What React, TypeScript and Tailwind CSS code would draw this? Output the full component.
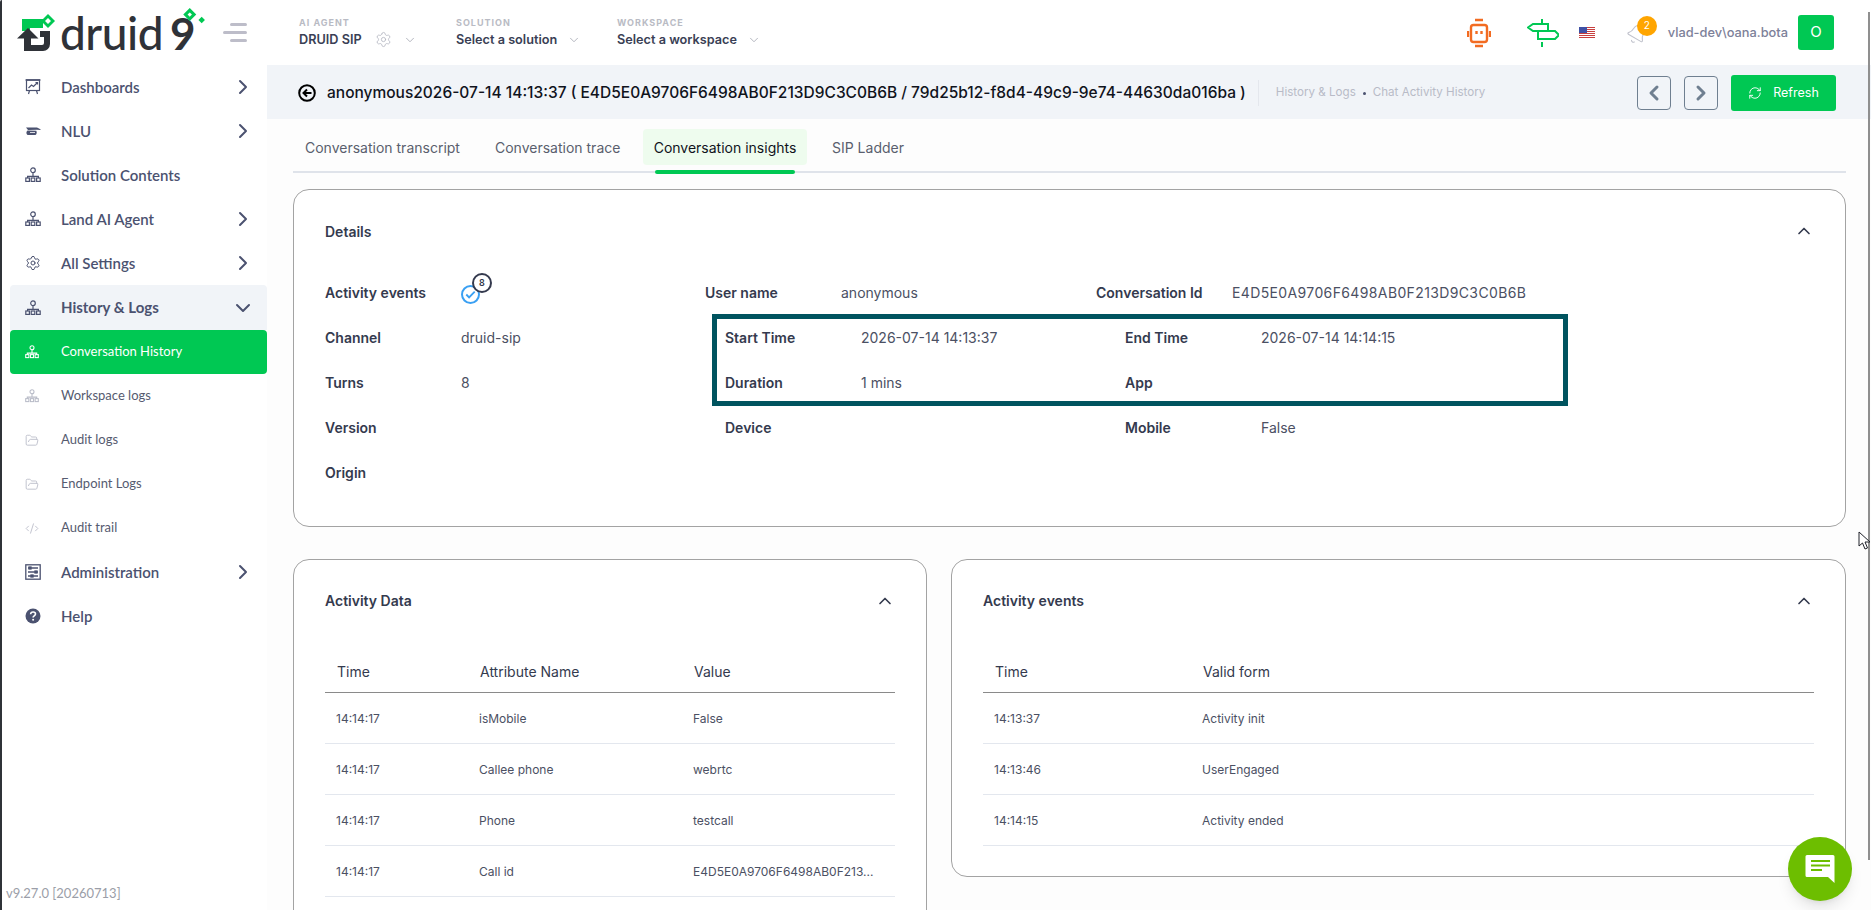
import { Bell, ChevronDown, ChevronLeft, ChevronRight, ChevronUp, CodeXml, FolderOpen, RefreshCw, Settings } from "lucide-react";
import { ReactNode } from "react";

function SiteMap({ className }: { className?: string }) {
    return (
        <svg viewBox="0 0 16 16" fill="none" stroke="currentColor" strokeWidth="1.2" className={className}>
            <circle cx="8" cy="3.2" r="2.3" />
            <path d="M8 5.5v4M2.6 11V9.3h10.8V11" />
            <rect x="0.8" y="11" width="3.6" height="3.4" />
            <rect x="6.2" y="11" width="3.6" height="3.4" />
            <rect x="11.6" y="11" width="3.6" height="3.4" />
        </svg>
    );
}

function BoardIcon({ className }: { className?: string }) {
    return (
        <svg viewBox="0 0 16 16" fill="none" stroke="currentColor" strokeWidth="1.2" className={className}>
            <path d="M0.6 1h14.800" strokeWidth="1.6" />
            <rect x="1.500" y="1" width="13" height="10.500" />
            <path d="M3.500 9l3-3 2 1.500L12.500 3.500M10.500 3.500h2v2" />
            <path d="M4.500 11.500L3.500 15M11.500 11.500l1 3.500" />
        </svg>
    );
}

function CapIcon({ className }: { className?: string }) {
    return (
        <svg viewBox="0 0 16 16" className={className}>
            <path d="M1 4.500h11l3.500 1.800v.7L12 6.800 3 7z" fill="currentColor" />
            <path d="M2.500 7.500c-1.500 1-1.500 3.500 0 4.500h8c1.200-.6 1.600-2.800.8-4.300z" fill="currentColor" />
            <path d="M5 9.500h5" stroke="#fff" strokeWidth="0.8" />
        </svg>
    );
}

function AdminIcon({ className }: { className?: string }) {
    return (
        <svg viewBox="0 0 16 16" fill="none" stroke="currentColor" strokeWidth="1.3" className={className}>
            <rect x="0.8" y="0.8" width="14.4" height="14.4" />
            <path d="M3 4h10M3 8h10M3 12h10" />
            <rect x="4" y="3" width="2" height="2" fill="currentColor" />
            <rect x="10" y="7" width="2" height="2" fill="currentColor" />
            <rect x="6" y="11" width="2" height="2" fill="currentColor" />
        </svg>
    );
}

function HelpIcon({ className }: { className?: string }) {
    return (
        <svg viewBox="0 0 16 16" className={className}>
            <circle cx="8" cy="8" r="7.5" fill="currentColor" />
            <path d="M5.6 6.2c.1-1.5 1.2-2.2 2.5-2.2 1.4 0 2.4.8 2.4 2 0 1.9-2.4 1.8-2.4 3.4" fill="none" stroke="#fff" strokeWidth="1.6" />
            <circle cx="8.1" cy="11.8" r="1" fill="#fff" />
        </svg>
    );
}

function Logo() {
    return (
        <div className="flex items-center">
            <svg viewBox="0 0 38 38" className="w-[38px] h-[38px] shrink-0">
                <path d="M5 5h21v9H13v3H5z" fill="#00c853" />
                <path d="M31 0l7 7-7 7-7-7z" fill="#00c853" />
                <path d="M31 4l3 3-3 3-3-3z" fill="#fff" />
                <path d="M11 14L0 24.500h7V37h19a7 7 0 0 0 7-7V17H23v6h4v6a2 2 0 0 1-2 2H14v-6.500h7.500z" fill="#2f3238" />
            </svg>
            <span className="ml-[5px] text-[46px] leading-none font-medium text-[#2f3238] tracking-[-0.5px] font-['Lato',sans-serif]">druid</span>
            <span className="relative text-[44px] leading-none font-bold text-[#2f3238] ml-[7px] font-['Lato',sans-serif]">
                9
                <svg viewBox="0 0 24 24" className="absolute left-[10px] top-[-4px] w-[26px] h-[26px]">
                    <path d="M9 1l6 6-6 6-6-6z" fill="#00c853" />
                    <path d="M9 5l2 2-2 2-2-2z" fill="#fff" />
                    <path d="M20 9l3 3-3 3-3-3z" fill="#00c853" />
                </svg>
            </span>
        </div>
    );
}

function NavItem({ icon, label, more }: { icon: ReactNode; label: string; more?: boolean }) {
    return (
        <div className="h-[44px] flex items-center pl-[15px] pr-[12px] text-[#4b5270]">
            <span className="w-[16px] flex justify-center shrink-0">{icon}</span>
            <span className="ml-[20px] text-[15px] font-semibold">{label}</span>
            {more && <ChevronRight className="ml-auto w-[24px] h-[24px]" strokeWidth={2} />}
        </div>
    );
}

function SubItem({ icon, label }: { icon: ReactNode; label: string }) {
    return (
        <div className="h-[44px] flex items-center pl-[15px] text-[#565b70]">
            <span className="w-[14px] flex justify-center shrink-0 text-[#b9bcc8]">{icon}</span>
            <span className="ml-[22px] text-[13px] font-normal">{label}</span>
        </div>
    );
}

function Sidebar() {
    return (
        <aside className="w-[267px] shrink-0 h-screen relative bg-white font-['Lato',sans-serif]">
            <div className="h-[65px] flex items-center pl-[17px] pr-[20px]">
                <Logo />
                <div className="ml-auto flex flex-col items-end gap-[5px]">
                    <div className="w-[17px] h-[3px] bg-[#bdbdc9] rounded" />
                    <div className="w-[24px] h-[3px] bg-[#bdbdc9] rounded" />
                    <div className="w-[17px] h-[3px] bg-[#bdbdc9] rounded" />
                </div>
            </div>
            <nav className="pl-[10px]">
                <NavItem label="Dashboards" more icon={<BoardIcon className="w-[16px] h-[16px]" />} />
                <NavItem label="NLU" more icon={<CapIcon className="w-[16px] h-[16px]" />} />
                <NavItem label="Solution Contents" icon={<SiteMap className="w-[16px] h-[16px]" />} />
                <NavItem label="Land AI Agent" more icon={<SiteMap className="w-[16px] h-[16px]" />} />
                <NavItem label="All Settings" more icon={<Settings className="w-[16px] h-[16px]" strokeWidth={1.5} />} />
                <div className="h-[45px] bg-[#f1f4f8] rounded-t-[4px] flex items-center pl-[15px] pr-[12px] text-[#4b5270]">
                    <span className="w-[16px] flex justify-center shrink-0"><SiteMap className="w-[16px] h-[16px]" /></span>
                    <span className="ml-[20px] text-[15px] font-bold">History &amp; Logs</span>
                    <ChevronDown className="ml-auto w-[24px] h-[24px]" strokeWidth={2} />
                </div>
                <div className="h-[44px] bg-[#00c853] rounded-[4px] flex items-center pl-[15px] text-white">
                    <span className="w-[14px] flex justify-center shrink-0"><SiteMap className="w-[14px] h-[14px]" /></span>
                    <span className="ml-[22px] text-[13px]">Conversation History</span>
                </div>
                <SubItem label="Workspace logs" icon={<SiteMap className="w-[14px] h-[14px]" />} />
                <SubItem label="Audit logs" icon={<FolderOpen className="w-[15px] h-[15px]" strokeWidth={1.5} />} />
                <SubItem label="Endpoint Logs" icon={<FolderOpen className="w-[15px] h-[15px]" strokeWidth={1.5} />} />
                <SubItem label="Audit trail" icon={<CodeXml className="w-[15px] h-[15px]" strokeWidth={1.5} />} />
                <NavItem label="Administration" more icon={<AdminIcon className="w-[16px] h-[16px]" />} />
                <NavItem label="Help" icon={<HelpIcon className="w-[16px] h-[16px]" />} />
            </nav>
            <div className="absolute left-[6px] bottom-[7px] text-[13px] text-[#9b9ea8]">v9.27.0 [20260713]</div>
        </aside>
    );
}

function Selector({ label, value, width, gear }: { label: string; value: string; width: string; gear?: boolean }) {
    return (
        <div className={width}>
            <div className="text-[9px] leading-[12px] font-bold tracking-[1px] text-[#b9bbc4]">{label}</div>
            <div className="flex items-center mt-[2px] text-[12.7px] leading-[18px] font-semibold text-[#3a3f55]">
                <span>{value}</span>
                {gear && <Settings className="w-[17px] h-[17px] ml-[13px] text-[#b5b7c2]" strokeWidth={1.2} />}
                <ChevronDown className={gear ? "w-[14px] h-[14px] ml-[11px] text-[#a9abb6]" : "w-[14px] h-[14px] ml-[10px] text-[#a9abb6]"} strokeWidth={1.5} />
            </div>
        </div>
    );
}

function TopBar() {
    return (
        <header className="h-[65px] shrink-0 flex items-center pl-[32px] pr-[37px] bg-white">
            <Selector label="AI AGENT" value="DRUID SIP" width="w-[157px]" gear />
            <Selector label="SOLUTION" value="Select a solution" width="w-[161px]" />
            <Selector label="WORKSPACE" value="Select a workspace" width="w-[160px]" />
            <div className="ml-auto flex items-center">
                <svg viewBox="0 0 24 30" fill="none" stroke="#f26b21" strokeWidth="2.4" className="w-[24px] h-[30px]">
                    <path d="M8 2h8M8 28h8" />
                    <rect x="4" y="7" width="16" height="17" rx="2.500" />
                    <path d="M1 13v6M23 13v6" />
                    <path d="M9.500 13v3M14.500 13v3" />
                </svg>
                <svg viewBox="0 0 32 30" fill="none" stroke="#00c853" strokeWidth="2" className="w-[32px] h-[30px] ml-[36px]">
                    <path d="M15 1v5M15 24v5" />
                    <path d="M6 6h15v7H6L1 9.500z" />
                    <path d="M11 13h17l4 4-4 4H11z" fill="#fff" />
                </svg>
                <svg viewBox="0 0 16 11" className="w-[16px] h-[11px] ml-[20px]">
                    <rect width="16" height="11" fill="#fff" />
                    <path d="M0 .5h16M0 2.500h16M0 4.500h16M0 6.500h16M0 8.500h16M0 10.500h16" stroke="#c8403f" strokeWidth="1" />
                    <rect width="8" height="6" fill="#3f51a5" />
                </svg>
                <div className="relative ml-[31px] w-[20px] h-[20px]">
                    <Bell className="w-[22px] h-[22px] text-[#c0c2cc] rotate-[30deg]" strokeWidth={1.2} />
                    <span className="absolute left-[11px] top-[-7px] w-[20px] h-[20px] rounded-full bg-[#ffa500] text-white text-[10px] flex items-center justify-center">2</span>
                </div>
                <span className="ml-[22px] text-[12.8px] font-medium text-[#7d8199]">vlad-dev\oana.bota</span>
                <div className="ml-[10px] w-[36px] h-[35px] rounded-[3px] bg-[#00c853] text-white text-[15px] flex items-center justify-center">O</div>
            </div>
        </header>
    );
}

function TitleBar() {
    return (
        <div className="h-[54px] shrink-0 bg-[#f1f4f8] flex items-center pt-[2px] pl-[31px] pr-[35px]">
            <svg viewBox="0 0 18 18" fill="none" stroke="#000" className="w-[18px] h-[18px]">
                <circle cx="9" cy="9" r="7.800" strokeWidth="2" />
                <path d="M13.500 9H6M9 5.500L5.500 9 9 12.500" strokeWidth="2" />
            </svg>
            <span className="ml-[11px] text-[15.5px] font-medium text-[#10131c] whitespace-nowrap">
                anonymous2026-07-14 14:13:37 ( E4D5E0A9706F6498AB0F213D9C3C0B6B / 79d25b12-f8d4-49c9-9e74-44630da016ba )
            </span>
            <div className="ml-[12px] h-[26px] w-px bg-[#e4e7ed]" />
            <span className="ml-[17px] text-[11.6px] text-[#b8bbc7] whitespace-nowrap">History &amp; Logs</span>
            <span className="mx-[7px] w-[3px] h-[3px] rounded-full bg-[#4b5270]" />
            <span className="text-[11.6px] text-[#b8bbc7] whitespace-nowrap">Chat Activity History</span>
            <div className="ml-auto flex items-center gap-[13px]">
                <button className="w-[34px] h-[34px] border border-[#6f7f90] rounded-[4px] flex items-center justify-center text-[#6f7f90]"><ChevronLeft className="w-[24px] h-[24px]" strokeWidth={3} /></button>
                <button className="w-[34px] h-[34px] border border-[#6f7f90] rounded-[4px] flex items-center justify-center text-[#6f7f90]"><ChevronRight className="w-[24px] h-[24px]" strokeWidth={3} /></button>
                <button className="w-[105px] h-[36px] bg-[#00c853] rounded-[3px] text-white text-[12.5px] flex items-center justify-center gap-[11px]">
                    <RefreshCw className="w-[14px] h-[14px]" strokeWidth={1.6} />
                    Refresh
                </button>
            </div>
        </div>
    );
}

function Tabs() {
    return (
        <div className="mt-[10px] h-[44px] flex border-b-2 border-[#dfe3ea] text-[14px] text-[#5a5f6e]">
            <div className="pl-[12px] w-[190px] h-[36px] flex items-center">Conversation transcript</div>
            <div className="w-[160px] h-[36px] pl-[12px] flex items-center">Conversation trace</div>
            <div className="relative w-[164px] h-[36px] bg-[#eefcee] rounded-[4px] flex items-center justify-center text-[#10131c]">
                Conversation insights
                <div className="absolute left-[12px] right-[12px] top-[41px] h-[4px] rounded bg-[#00c853]" />
            </div>
            <div className="ml-[25px] h-[36px] flex items-center">SIP Ladder</div>
        </div>
    );
}

function Field({ label, children, labelWidth = "w-[136px]", className }: { label: string; children?: ReactNode; labelWidth?: string; className?: string }) {
    return (
        <div className={`h-[45px] flex items-center text-[14px] ${className ?? ""}`}>
            <span className={`${labelWidth} shrink-0 font-semibold text-[#343a4e]`}>{label}</span>
            <span className="text-[#4b5063]">{children}</span>
        </div>
    );
}

function DetailsCard() {
    return (
        <section className="mt-[16px] h-[338px] border border-[#a3a3a3] rounded-[16px] bg-white px-[31px]">
            <div className="h-[82px] flex items-center justify-between">
                <h2 className="text-[14px] font-semibold text-[#343a4e]">Details</h2>
                <ChevronUp className="w-[20px] h-[20px] text-[#343a4e]" strokeWidth={2} />
            </div>
            <div className="flex -mt-[2px]">
                <div className="w-[380px] shrink-0">
                    <Field label="Activity events">
                        <span className="relative block w-[19px] h-[19px] rounded-full border-2 border-[#3aa0f3] mt-[3px]">
                            <svg viewBox="0 0 16 16" fill="none" stroke="#3aa0f3" strokeWidth="2" className="w-[15px] h-[15px]"><path d="M3.500 8l3 3 6-6" /></svg>
                            <span className="absolute left-[9px] top-[-14px] w-[20px] h-[20px] rounded-full border-2 border-[#343a4e] bg-white text-[9px] font-semibold text-[#343a4e] flex items-center justify-center">8</span>
                        </span>
                    </Field>
                    <Field label="Channel">druid-sip</Field>
                    <Field label="Turns">8</Field>
                    <Field label="Version" />
                    <Field label="Origin" />
                </div>
                <div className="flex-1">
                    <div className="h-[45px] flex">
                        <Field label="User name" className="w-[391px]">anonymous</Field>
                        <Field label="Conversation Id"><span className="tracking-[0.37px]">E4D5E0A9706F6498AB0F213D9C3C0B6B</span></Field>
                    </div>
                    <div className="ml-[8px] w-[854px] h-[90px] outline-[5px] -outline-offset-[4px] outline-[#00545f] pl-[12px]">
                        <div className="flex">
                            <Field label="Start Time" className="w-[400px]">2026-07-14 14:13:37</Field>
                            <Field label="End Time">2026-07-14 14:14:15</Field>
                        </div>
                        <div className="flex">
                            <Field label="Duration" className="w-[400px]">1 mins</Field>
                            <Field label="App" />
                        </div>
                    </div>
                    <div className="ml-[20px] flex">
                        <Field label="Device" className="w-[400px]" />
                        <Field label="Mobile">False</Field>
                    </div>
                </div>
            </div>
        </section>
    );
}

function TableCard({ title, heads, cols, rows, className }: { title: string; heads: string[]; cols: string[]; rows: string[][]; className: string }) {
    return (
        <section className={`border border-[#a3a3a3] rounded-[16px] bg-white px-[31px] ${className}`}>
            <div className="h-[81px] flex items-center justify-between">
                <h2 className="text-[14px] font-semibold text-[#343a4e]">{title}</h2>
                <ChevronUp className="w-[20px] h-[20px] text-[#343a4e]" strokeWidth={2} />
            </div>
            <div className="mt-[21px] h-[26px] pb-[4px] flex items-start border-b border-[#8a8a8a] box-content text-[14px] text-[#343a4e]">
                {heads.map((h, i) => (
                    <div key={h} className={`${cols[i]} pl-[12px] leading-[20px]`}>{h}</div>
                ))}
            </div>
            {rows.map((r, i) => (
                <div key={i} className="h-[51px] pt-[2px] flex items-center border-b border-[#e3e7ee] text-[12px] text-[#4b5063]">
                    {r.map((c, j) => (
                        <div key={j} className={`${cols[j]} pl-[11px] whitespace-nowrap`}>{c}</div>
                    ))}
                </div>
            ))}
        </section>
    );
}

export default function App() {
    return (
        <div className="relative h-screen overflow-hidden flex bg-white font-['Inter',sans-serif]">
            <Sidebar />
            <main className="flex-1 min-w-0 h-screen overflow-hidden flex flex-col bg-[#fdfdfd]">
                <TopBar />
                <TitleBar />
                <div className="pl-[26px] pr-[25px]">
                    <Tabs />
                    <DetailsCard />
                    <div className="mt-[32px] flex items-start gap-[24px]">
                        <TableCard
                            title="Activity Data"
                            className="w-[634px] shrink-0 h-[420px]"
                            heads={["Time", "Attribute Name", "Value"]}
                            cols={["w-[143px]", "w-[214px]", "w-[212px]"]}
                            rows={[
                                ["14:14:17", "isMobile", "False"],
                                ["14:14:17", "Callee phone", "webrtc"],
                                ["14:14:17", "Phone", "testcall"],
                                ["14:14:17", "Call id", "E4D5E0A9706F6498AB0F213..."],
                            ]}
                        />
                        <TableCard
                            title="Activity events"
                            className="flex-1 h-[318px]"
                            heads={["Time", "Valid form"]}
                            cols={["w-[208px]", "flex-1"]}
                            rows={[
                                ["14:13:37", "Activity init"],
                                ["14:13:46", "UserEngaged"],
                                ["14:14:15", "Activity ended"],
                            ]}
                        />
                    </div>
                </div>
            </main>
            {/* window edge, scrollbar thumb and mouse pointer from the capture */}
            <div className="absolute left-0 top-0 bottom-0 w-[2px] bg-[#2f3238] rounded-tl" />
            <div className="absolute right-[1px] top-[12px] h-[848px] w-[2px] bg-[#8f8f8f]" />
            <svg viewBox="0 0 14 20" className="absolute left-[1858px] top-[531px] w-[14px] h-[20px]" fill="#fff" stroke="#20222a" strokeWidth="1">
                <path d="M1 1v14l3.500-3 2.500 6 2.500-1-2.500-6h5z" />
            </svg>
            <button className="absolute left-[1788px] top-[837px] w-[64px] h-[64px] rounded-full bg-[#6dbe00] shadow-lg flex items-center justify-center">
                <svg viewBox="0 0 32 32" className="w-[32px] h-[32px]">
                    <path d="M3 2h26a1.500 1.500 0 0 1 1.500 1.500V30L24 24H3a1.500 1.500 0 0 1-1.500-1.500v-19A1.500 1.500 0 0 1 3 2z" fill="#fff" />
                    <path d="M7 8h19M7 12.500h19M7 17h11" stroke="#6dbe00" strokeWidth="2" />
                </svg>
            </button>
        </div>
    );
}
